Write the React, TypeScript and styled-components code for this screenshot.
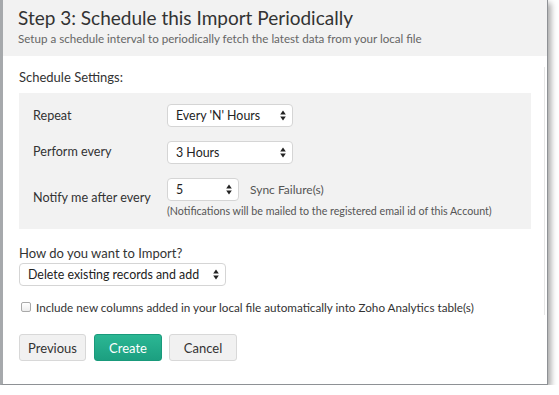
import React, { FC } from 'react';
import styled, { createGlobalStyle } from 'styled-components';

const GlobalStyle = createGlobalStyle`
  html, body {
    margin: 0;
    padding: 0;
    background: #ffffff;
  }
  body {
    font-family: Lato, "Open Sans", Arial, sans-serif;
    color: #333;
  }
`;

const Panel = styled.div`
  box-sizing: border-box;
  width: 548px;
  height: 385px;
  background: #fff;
  border-left: 3px solid #a6a9ac;
  border-right: 1px solid #8e9195;
  border-bottom: 1px solid #8e9195;
  box-shadow: 3px 3px 6px rgba(0, 0, 0, 0.35);
  position: relative;
`;

const Header = styled.div`
  background: #f2f2f2;
  height: 56px;
  padding: 5px 15px 0;
  box-sizing: border-box;
`;

const Title = styled.div`
  font-size: 19px;
  color: #333;
  line-height: 25px;
`;

const Subtitle = styled.div`
  font-size: 11.6px;
  color: #666;
  margin-top: 2px;
`;

const Body = styled.div`
  padding: 13px 15px 0 16px;
  display: flex;
  flex-direction: column;
`;

const SectionLabel = styled.div`
  font-size: 13px;
  color: #333;
  line-height: 16px;
`;

const SettingsBox = styled.div`
  margin-top: 8px;
  width: 512px;
  box-sizing: border-box;
  background: #f2f2f2;
  padding: 11px 14px 12px;
  display: flex;
  flex-direction: column;
  gap: 14px;
`;

const Row = styled.div`
  display: grid;
  grid-template-columns: 134px 1fr;
  align-items: center;
`;

const RowLabel = styled.div<{ $offset?: number }>`
  font-size: 12.6px;
  color: #333;
  margin-top: ${(p) => p.$offset ?? 0}px;
`;

const SelectBox = styled.div<{ $width: number }>`
  box-sizing: border-box;
  width: ${(p) => p.$width}px;
  height: 23px;
  background: #fff;
  border: 1px solid #d5d5d5;
  border-radius: 4px;
  display: flex;
  align-items: center;
  justify-content: space-between;
  padding: 0 6px 0 8px;
  font-size: 12.4px;
  color: #222;
`;

const NotifyWrap = styled.div`
  display: flex;
  flex-direction: column;
  gap: 3px;
`;

const Inline = styled.div`
  display: flex;
  align-items: center;
  gap: 11px;
`;

const Muted = styled.span`
  font-size: 12px;
  color: #555;
`;

const Note = styled.div`
  font-size: 10.7px;
  color: #555;
`;

const ImportLabel = styled(SectionLabel)`
  margin-top: 16px;
  margin-bottom: 2px;
`;

const CheckRow = styled.label`
  margin-top: 14px;
  display: flex;
  align-items: center;
  gap: 5px;
  font-size: 11.7px;
  color: #333;
`;

const Check = styled.span`
  box-sizing: border-box;
  width: 10px;
  height: 10px;
  margin-left: 2px;
  border: 1px solid #a9a9a9;
  border-radius: 2px;
  background: linear-gradient(#fff, #ededed);
`;

const Buttons = styled.div`
  margin-top: 20px;
  display: flex;
  gap: 7px;
`;

const Button = styled.div<{ $primary?: boolean; $width: number }>`
  box-sizing: border-box;
  width: ${(p) => p.$width}px;
  height: 27px;
  display: flex;
  align-items: center;
  justify-content: center;
  font-size: 13px;
  border-radius: 3px;
  background: ${(p) => (p.$primary ? 'linear-gradient(#2bb794, #1c9f80)' : '#f1f1f1')};
  color: ${(p) => (p.$primary ? '#fff' : '#333')};
  border: 1px solid ${(p) => (p.$primary ? '#199a7b' : '#d8d8d8')};
`;

const ScrollLine = styled.div`
  position: absolute;
  right: 2px;
  top: 67px;
  width: 1px;
  height: 248px;
  background: #e6e6e6;
`;

const Arrows: FC = () => (
  <svg width="6" height="11" viewBox="0 0 6 11">
    <path d="M3 0.5 L5.8 4.5 H0.2 Z" fill="#222" />
    <path d="M3 10.5 L5.8 6.5 H0.2 Z" fill="#222" />
  </svg>
);

const Select: FC<{ value: string; width: number }> = ({ value, width }) => (
  <SelectBox $width={width}>
    <span>{value}</span>
    <Arrows />
  </SelectBox>
);

const App: FC = () => (
  <>
    <GlobalStyle />
    <Panel>
      <Header>
        <Title>Step 3: Schedule this Import Periodically</Title>
        <Subtitle>Setup a schedule interval to periodically fetch the latest data from your local file</Subtitle>
      </Header>
      <Body>
        <SectionLabel>Schedule Settings:</SectionLabel>
        <SettingsBox>
          <Row>
            <RowLabel>Repeat</RowLabel>
            <Select value="Every 'N' Hours" width={126} />
          </Row>
          <Row>
            <RowLabel $offset={-3}>Perform every</RowLabel>
            <Select value="3 Hours" width={126} />
          </Row>
          <Row>
            <RowLabel>Notify me after every</RowLabel>
            <NotifyWrap>
              <Inline>
                <Select value="5" width={72} />
                <Muted>Sync Failure(s)</Muted>
              </Inline>
              <Note>(Notifications will be mailed to the registered email id of this Account)</Note>
            </NotifyWrap>
          </Row>
        </SettingsBox>
        <ImportLabel>How do you want to Import?</ImportLabel>
        <Select value="Delete existing records and add" width={207} />
        <CheckRow>
          <Check />
          Include new columns added in your local file automatically into Zoho Analytics table(s)
        </CheckRow>
        <Buttons>
          <Button $width={67}>Previous</Button>
          <Button $primary $width={68} style={{ marginLeft: 1 }}>Create</Button>
          <Button $width={68}>Cancel</Button>
        </Buttons>
      </Body>
      <ScrollLine />
    </Panel>
  </>
);

export default App;
